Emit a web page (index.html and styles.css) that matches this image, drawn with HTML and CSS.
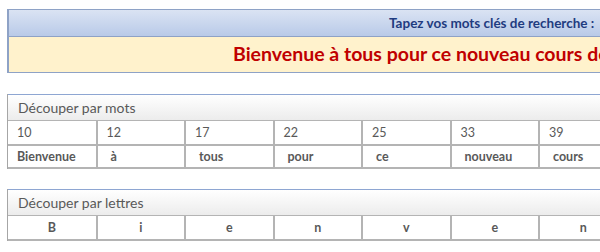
FILE: index.html
```html
<!DOCTYPE html>
<html lang="fr">
<head>
  <meta charset="UTF-8">
  <title>Découper texte</title>
  <link rel="stylesheet" href="styles.css">
</head>
<body>
  <!-- Bandeau de recherche -->
  <div class="banner">
    <div class="banner-top">Tapez vos mots clés de recherche :</div>
    <div class="banner-msg">Bienvenue à tous pour ce nouveau cours de</div>
  </div>

  <!-- Découpage par mots -->
  <div class="block words">
    <div class="block-title">Découper par mots</div>
    <table>
      <tr class="pos">
        <td>10</td><td>12</td><td>17</td><td>22</td><td>25</td><td>33</td><td>39</td>
      </tr>
      <tr class="word">
        <td>Bienvenue</td><td>à</td><td>tous</td><td>pour</td><td>ce</td><td>nouveau</td><td>cours</td>
      </tr>
    </table>
  </div>

  <!-- Découpage par lettres -->
  <div class="block letters">
    <div class="block-title">Découper par lettres</div>
    <table>
      <tr class="letter">
        <td>B</td><td>i</td><td>e</td><td>n</td><td>v</td><td>e</td><td>n</td>
      </tr>
    </table>
  </div>
</body>
</html>
```

FILE: styles.css
```css
body {
  margin: 0;
  padding: 9px 0 0 7px;
  font-family: Lato, "Open Sans", sans-serif;
  overflow: hidden;
  background: #fff;
}
.banner {
  width: 700px;
  border: 1px solid #8ea2c6;
  border-left-width: 2px;
}
.banner-top {
  height: 26px;
  line-height: 27px;
  background: linear-gradient(#dae3f3, #b9cae8);
  border-bottom: 1px solid #8ea2c6;
  color: #1f3c80;
  font-size: 13.5px;
  font-weight: bold;
  padding-left: 380px;
  white-space: nowrap;
}
.banner-msg {
  height: 35px;
  line-height: 34px;
  background: #fff2cc;
  color: #c00000;
  font-size: 19.5px;
  font-weight: bold;
  padding-left: 224px;
  white-space: nowrap;
  overflow: hidden;
}
.block {
  width: 720px;
  margin-top: 21px;
  border-left: 1px solid #a6a6a6;
}
.letters {
  margin-top: 20px;
}
.block-title {
  height: 25px;
  line-height: 26px;
  border-top: 1px solid #8ea6d2;
  border-bottom: 1px solid #b4b4b4;
  background: linear-gradient(#ffffff, #ececec);
  color: #595959;
  font-size: 14px;
  padding-left: 10px;
}
table {
  border-collapse: collapse;
  table-layout: fixed;
}
td {
  box-sizing: border-box;
  width: 88.5px;
  border-right: 2px solid #b4b4b4;
  border-bottom: 2px solid #b4b4b4;
  color: #595959;
  font-size: 12.5px;
  padding: 0 0 0 9px;
  white-space: nowrap;
}
.pos td {
  height: 24px;
}
.word td {
  height: 23px;
  font-weight: bold;
  padding-left: 13px;
}
.word td:first-child {
  padding-left: 9px;
}
.letter td {
  height: 24px;
  font-weight: bold;
  text-align: center;
  padding: 0;
}
```
